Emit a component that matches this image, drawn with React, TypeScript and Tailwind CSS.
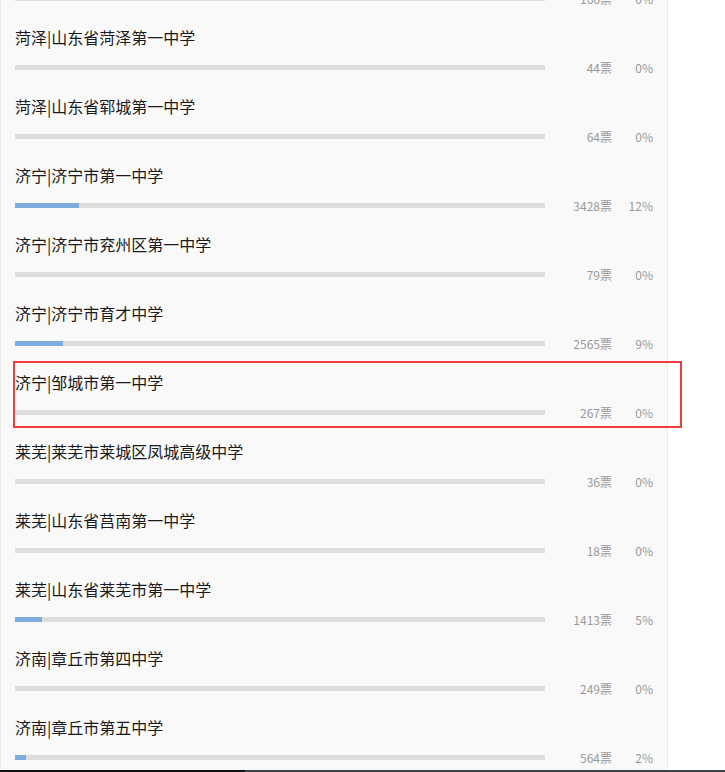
const OPTIONS = [
  { name: '', votes: 166, pct: 0 },
  { name: '菏泽|山东省菏泽第一中学', votes: 44, pct: 0 },
  { name: '菏泽|山东省郓城第一中学', votes: 64, pct: 0 },
  { name: '济宁|济宁市第一中学', votes: 3428, pct: 12 },
  { name: '济宁|济宁市兖州区第一中学', votes: 79, pct: 0 },
  { name: '济宁|济宁市育才中学', votes: 2565, pct: 9 },
  { name: '济宁|邹城市第一中学', votes: 267, pct: 0, marked: true },
  { name: '莱芜|莱芜市莱城区凤城高级中学', votes: 36, pct: 0 },
  { name: '莱芜|山东省莒南第一中学', votes: 18, pct: 0 },
  { name: '莱芜|山东省莱芜市第一中学', votes: 1413, pct: 5 },
  { name: '济南|章丘市第四中学', votes: 249, pct: 0 },
  { name: '济南|章丘市第五中学', votes: 564, pct: 2 },
];

export default function App() {
  return (
    <div className="relative w-[725px] h-[772px] overflow-hidden bg-white font-['Noto_Sans_CJK_SC','Noto_Sans',sans-serif]">
      <div className="flow-root w-[668px] h-[770px] bg-[#f9f9f9] border-l border-r border-[#ececec]">
        <div className="-mt-[69px]">
          {OPTIONS.map((opt, i) => (
            <div key={i} className="relative h-[69px] pl-[14px] pr-[14px] pt-[25px]">
              <div className="h-[24px] text-[16px] leading-[24px] text-[#1a1a1a] whitespace-nowrap">{opt.name}</div>
              <div className="flex h-[16px] mt-[11px]">
                <div className="w-[530px] h-[5px] mt-[5px] bg-[#dddddd]">
                  <div className="h-full bg-[#7eace1]" style={{ width: `${opt.pct}%` }} />
                </div>
                <div className="w-[67px] text-right text-[12px] leading-[15px] text-[#999]">{opt.votes}票</div>
                <div className="w-[41px] text-right text-[12px] leading-[15px] text-[#999]">{opt.pct}%</div>
              </div>
              {opt.marked && (
                <div className="absolute left-[12px] top-[16px] w-[669px] h-[67px] border-2 border-[#f53c3c]" />
              )}
            </div>
          ))}
        </div>
      </div>
      <div className="flex h-[2px]">
        <div className="w-[245px] bg-[#111]" />
        <div className="flex-1 bg-[#3d4246]" />
      </div>
    </div>
  );
}
